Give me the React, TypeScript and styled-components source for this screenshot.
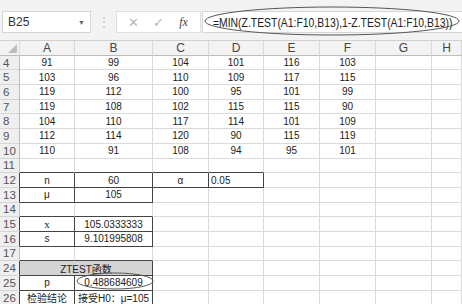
import styled, { createGlobalStyle } from "styled-components";

const GlobalStyle = createGlobalStyle`
  html, body {
    margin: 0;
    padding: 0;
  }
  body {
    width: 462px;
    height: 304px;
    overflow: hidden;
    background: #ffffff;
    font-family: "Liberation Sans", "Noto Sans CJK SC", sans-serif;
  }
`;

const Page = styled.div`
  position: relative;
  width: 462px;
  height: 304px;
  overflow: hidden;
`;

const FormulaBar = styled.div`
  height: 40px;
  box-sizing: border-box;
  padding: 11px 0 7px 2px;
  background: #f3f3f3;
  display: flex;
  align-items: stretch;
`;

const NameBox = styled.div`
  width: 89px;
  box-sizing: border-box;
  background: #fff;
  border: 1px solid #d6d6d6;
  display: flex;
  align-items: center;
  justify-content: space-between;
  padding: 0 5px 0 5px;
  font-size: 12px;
  color: #333;
`;

const Caret = styled.span`
  font-size: 7px;
  color: #666;
`;

const Grip = styled.div`
  width: 25px;
  display: flex;
  align-items: center;
  justify-content: center;
  color: #c4c4c4;
  font-size: 12px;
`;

const Buttons = styled.div`
  width: 85px;
  box-sizing: border-box;
  background: #fff;
  border: 1px solid #e0e0e0;
  display: flex;
  align-items: center;
  justify-content: space-around;
  padding: 0 4px 0 4px;
`;

const BarIcon = styled.span<{ $dark?: boolean }>`
  width: 20px;
  text-align: center;
  font-size: ${(p) => (p.$dark ? "12px" : "13px")};
  font-family: ${(p) => (p.$dark ? '"Liberation Serif", serif' : '"DejaVu Sans", sans-serif')};
  font-style: ${(p) => (p.$dark ? "italic" : "normal")};
  color: ${(p) => (p.$dark ? "#444" : "#b5b5b5")};
`;

const FormulaInput = styled.div`
  flex: 1;
  margin-left: 1px;
  background: #fff;
  border: 1px solid #d6d6d6;
  border-right: none;
  display: flex;
  align-items: center;
  padding-left: 10px;
  white-space: nowrap;
  overflow: hidden;
`;

const FormulaText = styled.span`
  display: inline-block;
  font-family: "Liberation Sans", sans-serif;
  font-size: 13.5px;
  color: #222;
  transform: scaleX(0.77);
  transform-origin: left center;
`;

const Sheet = styled.div`
  display: grid;
  grid-template-columns: 20px 55px 78px 56px 55px 56px 56px 56px 30px;
  grid-auto-rows: 14.7px;
  border-top: 1px solid #d0d0d0;
`;

const ColHead = styled.div`
  background: #f3f3f3;
  border-right: 1px solid #d8d8d8;
  border-bottom: 1px solid #bdbdbd;
  display: flex;
  align-items: center;
  justify-content: center;
  font-size: 12px;
  color: #444;
  overflow: hidden;
`;

const Corner = styled(ColHead)`
  justify-content: flex-end;
  align-items: flex-end;
  padding: 0 2px 2px 0;
`;

const RowHead = styled.div<{ $dr?: boolean }>`
  background: #efefef;
  border-right: 1px solid ${(p) => (p.$dr ? "#444" : "#bdbdbd")};
  border-bottom: 1px solid #d6d6d6;
  display: flex;
  align-items: center;
  padding-left: 3px;
  font-size: 11.5px;
  color: #555;
  overflow: hidden;
`;

const Cell = styled.div<{
  $left?: boolean;
  $dr?: boolean;
  $db?: boolean;
  $fill?: boolean;
  $span?: number;
  $serif?: boolean;
}>`
  grid-column: span ${(p) => p.$span || 1};
  border-right: 1px solid ${(p) => (p.$dr ? "#444" : "#dadada")};
  border-bottom: 1px solid ${(p) => (p.$db ? "#444" : "#dadada")};
  background: ${(p) => (p.$fill ? "#d4d4d4" : "#fff")};
  display: flex;
  align-items: center;
  justify-content: ${(p) => (p.$left ? "flex-start" : "center")};
  padding-left: ${(p) => (p.$left ? "2px" : "0")};
  font-size: ${(p) => (p.$serif ? "11px" : "10px")};
  font-family: ${(p) =>
    p.$serif ? '"Liberation Serif", serif' : '"Liberation Sans", "Noto Sans CJK SC", sans-serif'};
  color: #222;
  white-space: nowrap;
  overflow: hidden;
`;

const Mark = styled.svg`
  position: absolute;
  left: 0;
  top: 0;
  pointer-events: none;
`;

type CellSpec = {
  text?: string;
  left?: boolean;
  dr?: boolean;
  db?: boolean;
  fill?: boolean;
  span?: number;
  serif?: boolean;
};

type RowSpec = { label: string; dr?: boolean; cells: CellSpec[] };

const data = [
  ["4", "91", "99", "104", "101", "116", "103"],
  ["5", "103", "96", "110", "109", "117", "115"],
  ["6", "119", "112", "100", "95", "101", "99"],
  ["7", "119", "108", "102", "115", "115", "90"],
  ["8", "104", "110", "117", "114", "101", "109"],
  ["9", "112", "114", "120", "90", "115", "119"],
  ["10", "110", "91", "108", "94", "95", "101"],
];

const empty = (n: number): CellSpec[] => Array.from({ length: n }, () => ({}));

// borders: dr = dark right edge, db = dark bottom edge
const rows: RowSpec[] = [
  ...data.map(([label, ...vals]) => ({
    label,
    cells: [...vals.map((v) => ({ text: v })), {}, {}],
  })),
  { label: "11", cells: [{ db: true }, { db: true }, { db: true }, { db: true }, ...empty(4)] },
  {
    label: "12",
    dr: true,
    cells: [
      { text: "n", dr: true, db: true },
      { text: "60", dr: true, db: true },
      { text: "α", dr: true, db: true },
      { text: "0.05", left: true, dr: true, db: true },
      ...empty(4),
    ],
  },
  {
    label: "13",
    dr: true,
    cells: [
      { text: "μ", dr: true, db: true },
      { text: "105", dr: true, db: true },
      ...empty(6),
    ],
  },
  { label: "14", cells: [{ db: true }, { db: true }, ...empty(6)] },
  {
    label: "15",
    dr: true,
    cells: [
      { text: "x", serif: true, dr: true, db: true },
      { text: "105.0333333", dr: true, db: true },
      ...empty(6),
    ],
  },
  {
    label: "16",
    dr: true,
    cells: [
      { text: "s", dr: true, db: true },
      { text: "9.101995808", dr: true, db: true },
      ...empty(6),
    ],
  },
  { label: "17", cells: [{ db: true }, { db: true }, ...empty(6)] },
  {
    label: "24",
    dr: true,
    cells: [{ text: "ZTEST函数", span: 2, fill: true, dr: true, db: true }, ...empty(6)],
  },
  {
    label: "25",
    dr: true,
    cells: [
      { text: "p", dr: true, db: true },
      { text: "0.488684609", dr: true, db: true },
      ...empty(6),
    ],
  },
  {
    label: "26",
    dr: true,
    cells: [
      { text: "检验结论", dr: true, db: true },
      { text: "接受H0：μ=105", dr: true, db: true },
      ...empty(6),
    ],
  },
];

const columns = ["A", "B", "C", "D", "E", "F", "G", "H"];

const App = () => {
  return (
    <Page>
      <GlobalStyle />
      <FormulaBar>
        <NameBox>
          B25
          <Caret>▼</Caret>
        </NameBox>
        <Grip>⋮</Grip>
        <Buttons>
          <BarIcon>✕</BarIcon>
          <BarIcon>✓</BarIcon>
          <BarIcon $dark>fx</BarIcon>
        </Buttons>
        <FormulaInput>
          <FormulaText>=MIN(Z.TEST(A1:F10,B13),1-Z.TEST(A1:F10,B13))</FormulaText>
        </FormulaInput>
      </FormulaBar>
      <Sheet>
        <Corner>
          <svg width="9" height="9" viewBox="0 0 9 9">
            <polygon points="9,0 9,9 0,9" fill="#bdbdbd" />
          </svg>
        </Corner>
        {columns.map((c) => (
          <ColHead key={c}>{c}</ColHead>
        ))}
        {rows.map((r) => (
          <>
            <RowHead key={`h${r.label}`} $dr={r.dr}>
              {r.label}
            </RowHead>
            {r.cells.map((c, i) => (
              <Cell
                key={`${r.label}-${i}`}
                $left={c.left}
                $dr={c.dr}
                $db={c.db}
                $fill={c.fill}
                $span={c.span}
                $serif={c.serif}
              >
                {c.text}
              </Cell>
            ))}
          </>
        ))}
      </Sheet>
      <Mark width="462" height="304">
        <ellipse cx="332" cy="21" rx="127" ry="14" fill="none" stroke="#555" strokeWidth="1" />
        <ellipse cx="115" cy="281" rx="38" ry="8" fill="none" stroke="#555" strokeWidth="1" />
      </Mark>
    </Page>
  );
};

export default App;
